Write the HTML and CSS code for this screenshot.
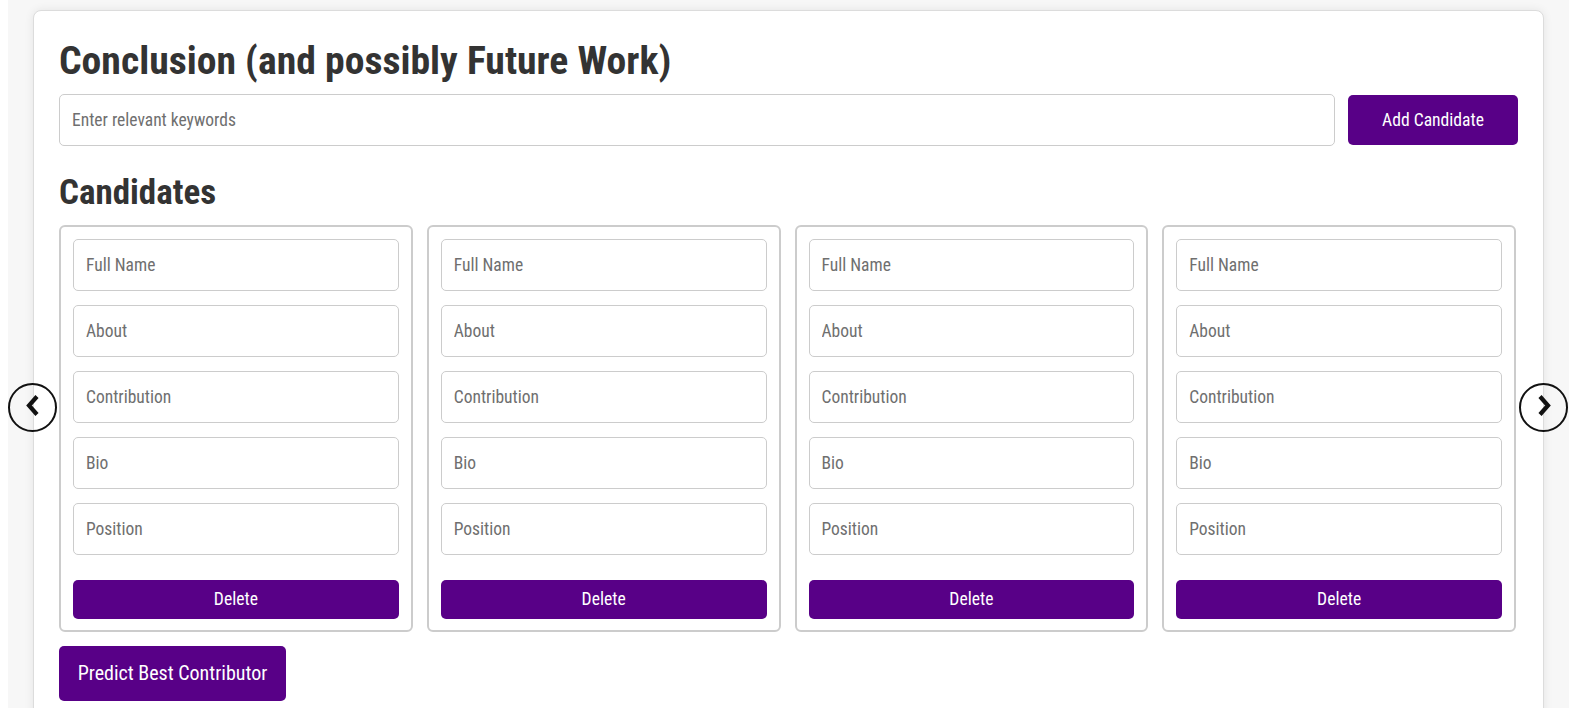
FILE: index.html
```html
<!DOCTYPE html>
<html lang="en">
<head>
<meta charset="utf-8">
<title>Candidates</title>
<link rel="stylesheet" href="styles.css">
</head>
<body>
<div class="page">
  <div class="card">
    <h1 class="title">Conclusion (and possibly Future Work)</h1>
    <div class="keyword-row">
      <input class="field keyword" type="text" placeholder="Enter relevant keywords">
      <button class="btn add-btn">Add Candidate</button>
    </div>
    <h2 class="section">Candidates</h2>
    <div class="carousel">
      <button class="nav prev" aria-label="Previous">
        <svg width="20" height="24" viewBox="0 0 20 24"><path d="M14 2.5 L6 11.5 L14 20.5" fill="none" stroke="#111" stroke-width="4.2"/></svg>
      </button>
      <div class="track">
        <div class="cand">
          <input class="field" type="text" placeholder="Full Name">
          <input class="field" type="text" placeholder="About">
          <input class="field" type="text" placeholder="Contribution">
          <input class="field" type="text" placeholder="Bio">
          <input class="field" type="text" placeholder="Position">
          <button class="btn del-btn">Delete</button>
        </div>
        <div class="cand">
          <input class="field" type="text" placeholder="Full Name">
          <input class="field" type="text" placeholder="About">
          <input class="field" type="text" placeholder="Contribution">
          <input class="field" type="text" placeholder="Bio">
          <input class="field" type="text" placeholder="Position">
          <button class="btn del-btn">Delete</button>
        </div>
        <div class="cand">
          <input class="field" type="text" placeholder="Full Name">
          <input class="field" type="text" placeholder="About">
          <input class="field" type="text" placeholder="Contribution">
          <input class="field" type="text" placeholder="Bio">
          <input class="field" type="text" placeholder="Position">
          <button class="btn del-btn">Delete</button>
        </div>
        <div class="cand">
          <input class="field" type="text" placeholder="Full Name">
          <input class="field" type="text" placeholder="About">
          <input class="field" type="text" placeholder="Contribution">
          <input class="field" type="text" placeholder="Bio">
          <input class="field" type="text" placeholder="Position">
          <button class="btn del-btn">Delete</button>
        </div>
      </div>
      <button class="nav next" aria-label="Next">
        <svg width="20" height="24" viewBox="0 0 20 24"><path d="M6 2.5 L14 11.5 L6 20.5" fill="none" stroke="#111" stroke-width="4.2"/></svg>
      </button>
    </div>
    <button class="btn predict">Predict Best Contributor</button>
  </div>
</div>
</body>
</html>
```
FILE: styles.css
```css
* { box-sizing: border-box; }

body {
  margin: 0;
  background: #fff;
  font-family: "Roboto Condensed", Roboto, "Liberation Sans", sans-serif;
}

.page {
  margin: 0 18px 0 8px;
  background: #f7f7f7;
  padding: 10px 25px 30px;
  min-height: 708px;
}

.card {
  background: #fff;
  border: 1px solid #dcdcdc;
  border-radius: 8px;
  box-shadow: 0 0 10px rgba(0, 0, 0, 0.08);
  padding: 26px 25px 25px;
}

.title {
  margin: 0 0 9px;
  font-size: 39.7px;
  line-height: 1.2;
  font-weight: 700;
  color: #333;
}

.section {
  margin: 26px 0 11px;
  font-size: 35px;
  line-height: 1.2;
  font-weight: 700;
  color: #333;
}

.keyword-row {
  display: flex;
  align-items: center;
  gap: 13px;
}

.field {
  display: block;
  width: 100%;
  height: 52px;
  border: 1px solid #ccc;
  border-radius: 5px;
  padding: 0 12px;
  font-family: inherit;
  font-size: 17.5px;
  color: #333;
  background: #fff;
  outline: none;
}

.field::placeholder { color: #6f6f6f; }

.keyword { flex: 1; }

.btn {
  background: #580087;
  color: #fff;
  border: none;
  border-radius: 5px;
  font-family: inherit;
  font-weight: 400;
  cursor: pointer;
}

.add-btn {
  flex: none;
  width: 170px;
  height: 50px;
  font-size: 17.6px;
}

.carousel { position: relative; }

.track {
  display: grid;
  grid-template-columns: repeat(4, 1fr);
  gap: 14px;
  margin-right: 2px;
}

.cand {
  border: 2px solid #ccc;
  border-radius: 6px;
  padding: 12px 12px 11px;
  display: flex;
  flex-direction: column;
  gap: 14px;
}

.del-btn {
  margin-top: 11px;
  height: 39px;
  font-size: 17.6px;
}

.nav {
  position: absolute;
  top: 158px;
  width: 49px;
  height: 49px;
  border: 2px solid #111;
  border-radius: 50%;
  background: transparent;
  padding: 0;
  display: flex;
  align-items: center;
  justify-content: center;
  cursor: pointer;
}

.nav svg { display: block; margin-top: -2px; }

.prev { left: -51px; }
.next { right: -50px; }

.predict {
  margin-top: 14px;
  width: 227px;
  height: 55px;
  font-size: 20px;
}
```
